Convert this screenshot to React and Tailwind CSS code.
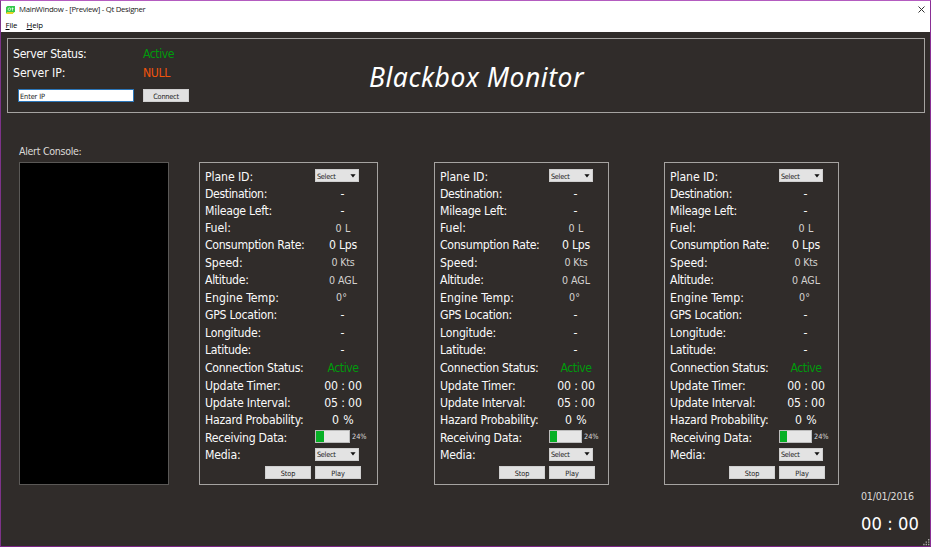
import { useLayoutEffect, useRef, useState } from 'react';

// Text run whose tracking is computed so that it fills exactly `w` pixels.
function Fit({ w, children, className = '' }) {
  const ref = useRef(null);
  const [spacing, setSpacing] = useState(0);
  useLayoutEffect(() => {
    const natural = ref.current.getBoundingClientRect().width;
    setSpacing((w - natural) / String(children).length);
  }, []);
  return (
    <span ref={ref} className={`inline-block whitespace-pre ${className}`} style={{ letterSpacing: `${spacing}px` }}>
      {children}
    </span>
  );
}

const big = 'pt-[2px] text-[12.2px] text-[#fafafa]';
const small = 'pt-px text-[10.6px] text-[#d4d2d0]';
const active = 'pt-[2px] text-[12.2px] text-[#009a0c]';

const rows = [
  { h: 'h-[18px]', label: 'Plane ID:', lw: 48, kind: 'select' },
  { h: 'h-[17px]', label: 'Destination:', lw: 62, value: '-', vw: 5, cls: big },
  { h: 'h-[17px]', label: 'Mileage Left:', lw: 67, value: '-', vw: 5, cls: big },
  { h: 'h-[17px]', label: 'Fuel:', lw: 26, value: '0 L', vw: 15, cls: small },
  { h: 'h-[17px]', label: 'Consumption Rate:', lw: 99.5, value: '0 Lps', vw: 28, cls: big },
  { h: 'h-[18px]', label: 'Speed:', lw: 37.5, value: '0 Kts', vw: 23, cls: small },
  { h: 'h-[17px]', label: 'Altitude:', lw: 43.5, value: '0 AGL', vw: 28, cls: small },
  { h: 'h-[18px]', label: 'Engine Temp:', lw: 74, value: '0°', vw: 11, cls: `${small} mr-[3px]` },
  { h: 'h-[17px]', label: 'GPS Location:', lw: 72, value: '-', vw: 5, cls: big },
  { h: 'h-[18px]', label: 'Longitude:', lw: 56, value: '-', vw: 5, cls: big },
  { h: 'h-[17px]', label: 'Latitude:', lw: 46, value: '-', vw: 5, cls: big },
  { h: 'h-[18px]', label: 'Connection Status:', lw: 98.5, value: 'Active', vw: 31, cls: active },
  { h: 'h-[18px]', label: 'Update Timer:', lw: 75.5, value: '00 : 00', vw: 37.5, cls: big },
  { h: 'h-[17px]', label: 'Update Interval:', lw: 85.5, value: '05 : 00', vw: 37.5, cls: big },
  { h: 'h-[17px]', label: 'Hazard Probability:', lw: 98.5, value: '0 %', vw: 22, cls: big },
  { h: 'h-[18px]', label: 'Receiving Data:', lw: 82, kind: 'progress' },
  { h: 'h-[17px]', label: 'Media:', lw: 35.5, kind: 'select' },
];

function Select() {
  return (
    <div className="-mt-px flex h-[13px] w-[44px] items-center justify-between border border-[#cfcfcf] bg-[#e3e3e3] pr-[2px] pl-[1px] text-[7.3px] leading-none text-[#222]">
      <Fit w={18.5} className="pt-[2px]">Select</Fit>
      <svg width="6" height="4" viewBox="0 0 6 4"><path d="M0.4 0.3h5.2L3 3.5z" fill="#111" /></svg>
    </div>
  );
}

function Button({ children, w, tw }) {
  return (
    <button className={`flex h-[13px] items-center justify-center border border-[#d0d0d0] bg-[#e1e1e1] text-[7.3px] leading-none text-[#1c1c1c] ${w}`}>
      <Fit w={tw} className="pt-[2px]">{children}</Fit>
    </button>
  );
}

function Plane({ width, control, bar, values, buttons }) {
  return (
    <section className={`h-[323px] shrink-0 border border-[#a5a3a1] pt-1 ${width}`}>
      {rows.map((r) => (
        <div key={r.label} className={`flex items-center pl-[5px] leading-none ${r.h}`}>
          <div className={`flex shrink-0 ${r.kind ? control : values}`}>
            <Fit w={r.lw} className={big}>{r.label}</Fit>
          </div>
          {r.kind === 'select' && <Select />}
          {r.kind === 'progress' && (
            <div className="flex items-center gap-[2px]">
              <div className={`-mt-[2px] flex h-[13px] border border-[#bcbcbc] bg-[#e6e6e6] ${bar}`}>
                <div className="w-[23%] bg-[#06b025]" />
              </div>
              <Fit w={14.5} className="text-[7.3px] text-[#dddddd]">24%</Fit>
            </div>
          )}
          {r.value && (
            <div className="flex w-[44px] justify-center">
              <Fit w={r.vw} className={r.cls}>{r.value}</Fit>
            </div>
          )}
        </div>
      ))}
      <div className={`mt-[3px] flex gap-[4px] ${buttons}`}>
        <Button w="w-[46px]" tw={14.5}>Stop</Button>
        <Button w="w-[46px]" tw={13.5}>Play</Button>
      </div>
    </section>
  );
}

export default function App() {
  return (
    <div className="flex h-[547px] w-[931px] flex-col overflow-hidden border border-t-[#b45cc0] border-r-[#8a2f96] border-b-[#7a2585] border-l-[#7d3389] bg-[#302c2a] font-['DejaVu_Sans_Condensed','DejaVu_Sans',sans-serif] [font-stretch:condensed] text-[#f4f4f4]">
      <header className="h-[31px] shrink-0 bg-white font-['Open_Sans',sans-serif] text-black [font-stretch:normal]">
        <div className="flex h-[17px] items-center pr-[5px] pl-[5px] text-[7.8px] leading-none">
          <svg width="9" height="8" viewBox="0 0 9 8">
            <path d="M1.5 0H9v5.5L7.5 7H0V1.2z" fill="#35c94a" />
            <path d="M1 6h7L6.8 8H0z" fill="#e5d524" />
            <circle cx="3.4" cy="3.2" r="1.3" fill="none" stroke="#e9ffe9" strokeWidth=".8" />
            <path d="M6.5 1.5v3.2M5.6 2.5h1.9" stroke="#e9ffe9" strokeWidth=".8" />
          </svg>
          <Fit w={126.5} className="ml-[4px] text-[#222]">MainWindow - [Preview] - Qt Designer</Fit>
          <svg className="ml-auto" width="7" height="7" viewBox="0 0 7 7"><path d="M.5.5l6 6M6.5.5l-6 6" stroke="#333" strokeWidth="1" /></svg>
        </div>
        <div className="flex h-[14px] items-center pt-px pl-[4.5px] text-[7.8px] leading-none">
          <div className="flex w-[21px]"><span className="underline underline-offset-1">F</span><Fit w={7.5}>ile</Fit></div>
          <div className="flex"><span className="underline underline-offset-1">H</span><Fit w={10.5}>elp</Fit></div>
        </div>
      </header>

      <section className="mx-[6px] mt-[6px] flex h-[75px] w-[918px] shrink-0 border border-[#a5a3a1]">
        <div className="w-[361px] shrink-0 pl-[5px]">
          <div className="mt-[5px] flex h-[19px] items-center leading-none">
            <div className="flex w-[130px]"><Fit w={73.5} className={big}>Server Status:</Fit></div>
            <Fit w={31} className={active}>Active</Fit>
          </div>
          <div className="flex h-[19px] items-center leading-none">
            <div className="flex w-[130px]"><Fit w={52.5} className={big}>Server IP:</Fit></div>
            <Fit w={27} className="pt-[2px] text-[12.2px] text-[#f0540c]">NULL</Fit>
          </div>
          <div className="mt-[7px] flex items-center pl-[5px]">
            <div className="flex h-[13px] w-[116px] items-center border border-[#2b76b9] bg-white pl-px text-[7.3px] leading-none text-[#222]">
              <Fit w={25} className="pt-[2px]">Enter IP</Fit>
            </div>
            <div className="ml-[9px]"><Button w="w-[46px]" tw={25.5}>Connect</Button></div>
          </div>
        </div>
        <h1 className="mt-[22px] h-8 font-['Noto_Sans',sans-serif] text-[26.5px] leading-8 text-white italic">
          <Fit w={215}>Blackbox Monitor</Fit>
        </h1>
      </section>

      <main className="flex shrink-0">
        <div className="ml-[18px] w-[150px] shrink-0 pt-[32px]">
          <div className="flex h-[17px] items-start leading-none">
            <Fit w={62.5} className="pt-px text-[10.6px] text-[#dcdad8]">Alert Console:</Fit>
          </div>
          <div className="h-[323px] border border-[#5a5856] bg-black" />
        </div>
        <div className="ml-[30px] flex pt-[49px]">
          <Plane width="w-[179px]" control="w-[110px]" values="w-[116px]" bar="w-[35px]" buttons="ml-[65px]" />
          <div className="w-[56px]" />
          <Plane width="w-[175px]" control="w-[109px]" values="w-[114px]" bar="w-[33px]" buttons="ml-[64px]" />
          <div className="w-[55px]" />
          <Plane width="w-[175px]" control="w-[109px]" values="w-[114px]" bar="w-[33px]" buttons="ml-[64px]" />
        </div>
      </main>

      <footer className="flex min-h-0 flex-1">
        <div className="ml-[860px] w-[62px] shrink-0 pt-[4px]">
          <div className="flex h-[14px] items-center leading-none"><Fit w={53} className="text-[10.6px] text-[#dcdad8]">01/01/2016</Fit></div>
          <div className="mt-[9px] flex h-[24px] items-center leading-none"><Fit w={58} className="text-[18.2px] text-white">00 : 00</Fit></div>
        </div>
        <svg className="mt-auto shrink-0" width="7" height="7" viewBox="0 0 7 7" fill="#a8a6a4">
          <path d="M5 0h1.4v1.4H5zM2.6 2.4H4v1.4H2.6zM5 2.4h1.4v1.4H5zM.2 4.8h1.4v1.4H.2zM2.6 4.8H4v1.4H2.6zM5 4.8h1.4v1.4H5z" />
        </svg>
      </footer>
    </div>
  );
}
